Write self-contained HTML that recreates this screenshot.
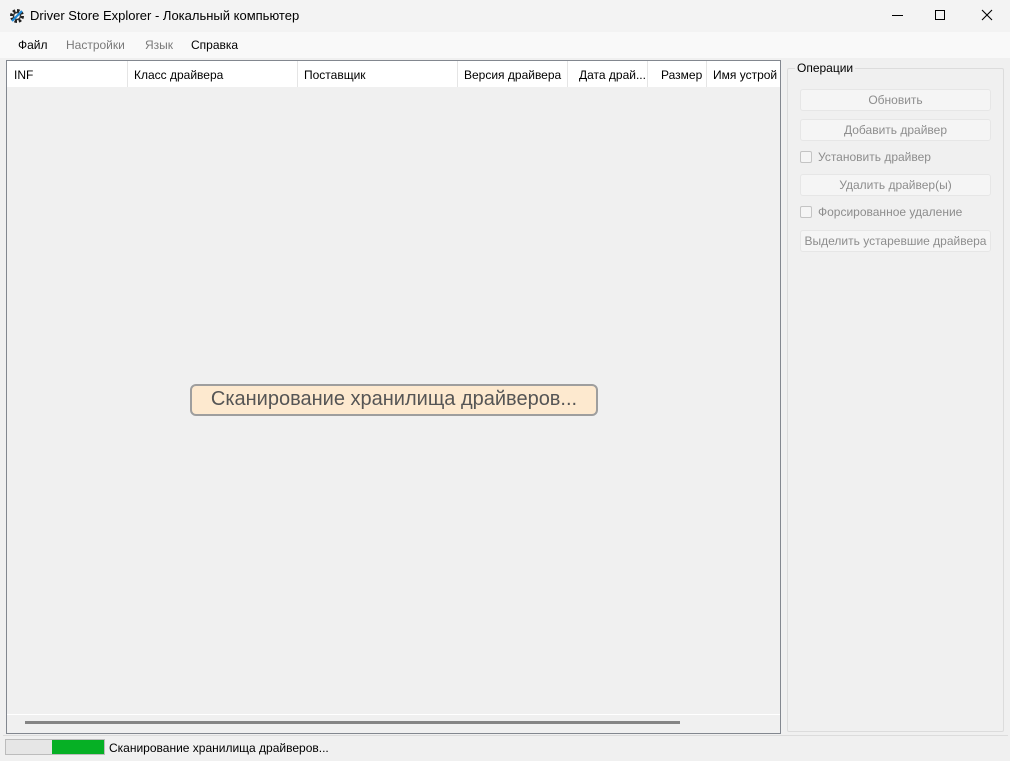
<!DOCTYPE html>
<html><head><meta charset="utf-8"><style>
*{margin:0;padding:0;box-sizing:border-box}
body{width:1010px;height:761px;overflow:hidden;background:#f0f0f0;font-family:"Liberation Sans","DejaVu Sans",sans-serif;font-size:12px;color:#000;position:relative}
.abs{position:absolute}
#title{left:0;top:0;width:1010px;height:32px;background:#f3f3f3}
#menu{left:0;top:32px;width:1010px;height:26px;background:#f9f9f9}
.mi{position:absolute;top:38px;font-size:12px}
#list{left:6px;top:60px;width:775px;height:674px;border:1px solid #82878f;background:#f0f0f0}
#hdr{left:0;top:0;width:773px;height:26px;background:#fff}
.h{position:absolute;top:7px;font-size:12px;white-space:nowrap}
.sep{position:absolute;top:0;width:1px;height:26px;background:#e5e5e5}
.btn{position:absolute;left:800px;width:191px;height:22px;background:#f5f5f5;border:1px solid #e6e6e6;border-radius:3px;color:#8d8d8d;text-align:center;line-height:20px;font-size:12px}
.cb{position:absolute;left:800px;width:12px;height:12px;border:1px solid #c4c4c4;border-radius:2px;background:#f5f5f5}
.cl{position:absolute;left:818px;color:#8d8d8d;font-size:12px}
</style></head><body>
<div id="title" class="abs"></div>
<svg class="abs" style="left:9px;top:8px" width="16" height="16" viewBox="0 0 16 16"><circle cx="8" cy="8" r="5.5" fill="none" stroke="#222" stroke-width="3" stroke-dasharray="2.5 1.8"/><circle cx="8" cy="8" r="3.5" fill="none" stroke="#333" stroke-width="1.5"/><path d="M3 13 L13 3" stroke="#1e88d6" stroke-width="2.2"/></svg>
<div class="abs" style="left:30px;top:8px;font-size:13px">Driver Store Explorer - Локальный компьютер</div>
<div class="abs" style="left:892px;top:15px;width:11px;height:1px;background:#000"></div>
<div class="abs" style="left:935px;top:10px;width:10px;height:10px;border:1px solid #000"></div>
<svg class="abs" style="left:981px;top:9px" width="12" height="12"><path d="M1 1L11 11M11 1L1 11" stroke="#000" stroke-width="1.1"/></svg>
<div id="menu" class="abs"></div>
<div class="mi" style="left:18px">Файл</div>
<div class="mi" style="left:66px;color:#7a7a7a">Настройки</div>
<div class="mi" style="left:145px;color:#7a7a7a">Язык</div>
<div class="mi" style="left:191px">Справка</div>
<div id="list" class="abs">
 <div id="hdr" class="abs">
  <div class="h" style="left:7px">INF</div>
  <div class="sep" style="left:120px"></div>
  <div class="h" style="left:127px">Класс драйвера</div>
  <div class="sep" style="left:290px"></div>
  <div class="h" style="left:297px">Поставщик</div>
  <div class="sep" style="left:450px"></div>
  <div class="h" style="left:457px">Версия драйвера</div>
  <div class="sep" style="left:560px"></div>
  <div class="h" style="left:572px">Дата драй...</div>
  <div class="sep" style="left:640px"></div>
  <div class="h" style="left:654px">Размер</div>
  <div class="sep" style="left:699px"></div>
  <div class="h" style="left:706px">Имя устрой</div>
 </div>
 <div class="abs" style="left:0;top:653px;width:773px;height:1px;background:#fff"></div>
 <div class="abs" style="left:18px;top:660px;width:655px;height:3px;background:#858585"></div>
</div>
<div class="abs" style="left:190px;top:384px;width:408px;height:32px;background:#fde9cf;border:2px solid #9e9e9e;border-radius:6px;font-size:20px;color:#555;text-align:center;line-height:27px">Сканирование хранилища драйверов...</div>
<div class="abs" style="left:787px;top:68px;width:217px;height:664px;border:1px solid #dcdcdc;border-radius:2px"></div>
<div class="abs" style="left:795px;top:61px;background:#f0f0f0;padding:0 2px;font-size:12px">Операции</div>
<div class="btn" style="top:89px">Обновить</div>
<div class="btn" style="top:119px">Добавить драйвер</div>
<div class="cb" style="top:151px"></div><div class="cl" style="top:150px">Установить драйвер</div>
<div class="btn" style="top:174px">Удалить драйвер(ы)</div>
<div class="cb" style="top:206px"></div><div class="cl" style="top:205px">Форсированное удаление</div>
<div class="btn" style="top:230px">Выделить устаревшие драйвера</div>
<div class="abs" style="left:3px;top:735px;width:1005px;height:1px;background:#dcdcdc"></div>
<div class="abs" style="left:5px;top:739px;width:100px;height:16px;background:#e6e6e6;border:1px solid #bcbcbc"></div>
<div class="abs" style="left:52px;top:740px;width:52px;height:14px;background:#06b025"></div>
<div class="abs" style="left:109px;top:741px;font-size:12px">Сканирование хранилища драйверов...</div>
</body></html>
